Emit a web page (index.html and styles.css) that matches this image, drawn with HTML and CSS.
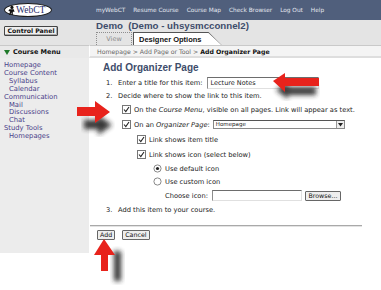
FILE: index.html
```html
<!DOCTYPE html>
<html lang="en">
<head>
    <meta charset="UTF-8">
    <title>WebCT - Add Organizer Page</title>
    <link rel="stylesheet" href="styles.css">
</head>
<body>
    <div class="page">
        <header class="topbar">
            <div class="brand">
                <div class="logo">
                    <svg class="logo-figure" width="7" height="11" viewBox="0 0 8 11">
                        <circle cx="4.5" cy="2" r="1.8" fill="#111"/>
                        <path d="M1.5 4 L6.5 4 L7.5 7 L5.5 7 L5.5 10.5 L4 10.5 L4 7.5 L2.5 10.5 L1 10.5 L2.5 6.5 L0.5 6 Z" fill="#111"/>
                    </svg>
                    <span class="logo-text">WebCT</span>
                </div>
            </div>
            <nav class="nav">
                <a href="#">myWebCT</a>
                <a href="#">Resume Course</a>
                <a href="#">Course Map</a>
                <a href="#">Check Browser</a>
                <a href="#">Log Out</a>
                <a href="#">Help</a>
            </nav>
        </header>

        <div class="layout">
            <div class="side-head">
                <button class="cp-btn">Control Panel</button>
            </div>
            <div class="course-head">
                <h1 class="course-title">Demo&nbsp; (Demo - uhsysmcconnel2)</h1>
                <div class="tabs">
                    <span class="tab-view">View</span>
                    <span class="tab-on"><span class="tab-inner">Designer Options</span></span>
                </div>
            </div>

            <div class="menu-title"><span class="tri"></span>Course Menu</div>
            <div class="crumbs">Homepage &gt; Add Page or Tool &gt; <b>Add Organizer Page</b></div>

            <ul class="menu">
                <li><a href="#">Homepage</a></li>
                <li><a href="#">Course Content</a></li>
                <li class="sub"><a href="#">Syllabus</a></li>
                <li class="sub"><a href="#">Calendar</a></li>
                <li><a href="#">Communication</a></li>
                <li class="sub"><a href="#">Mail</a></li>
                <li class="sub"><a href="#">Discussions</a></li>
                <li class="sub"><a href="#">Chat</a></li>
                <li><a href="#">Study Tools</a></li>
                <li class="sub"><a href="#">Homepages</a></li>
            </ul>

            <main class="content">
                <h2 class="page-title">Add Organizer Page</h2>

                <div class="row step">
                    <span class="num">1.</span>
                    <span>Enter a title for this item:</span>
                    <span class="field title-field">Lecture Notes</span>
                </div>
                <div class="row step">
                    <span class="num">2.</span>
                    <span>Decide where to show the link to this item.</span>
                </div>
                <div class="row opt">
                    <svg class="cb" width="9" height="9" viewBox="0 0 9 9"><rect x="0.5" y="0.5" width="8" height="8" fill="#fff" stroke="#777"/><path d="M2 4.5 L3.8 6.5 L7 2" fill="none" stroke="#222" stroke-width="1.1"/></svg>
                    <span>On the <i>Course Menu</i>, visible on all pages. Link will appear as text.</span>
                </div>
                <div class="row opt">
                    <svg class="cb" width="9" height="9" viewBox="0 0 9 9"><rect x="0.5" y="0.5" width="8" height="8" fill="#fff" stroke="#777"/><path d="M2 4.5 L3.8 6.5 L7 2" fill="none" stroke="#222" stroke-width="1.1"/></svg>
                    <span>On an <i>Organizer Page</i>:</span>
                    <span class="select">
                        <span class="select-text">Homepage</span>
                        <span class="select-btn"><svg width="5" height="4" viewBox="0 0 5 4"><path d="M0 0 L5 0 L2.5 3.5 Z" fill="#222"/></svg></span>
                    </span>
                </div>
                <div class="row sub-opt">
                    <svg class="cb" width="9" height="9" viewBox="0 0 9 9"><rect x="0.5" y="0.5" width="8" height="8" fill="#fff" stroke="#777"/><path d="M2 4.5 L3.8 6.5 L7 2" fill="none" stroke="#222" stroke-width="1.1"/></svg>
                    <span>Link shows item title</span>
                </div>
                <div class="row sub-opt">
                    <svg class="cb" width="9" height="9" viewBox="0 0 9 9"><rect x="0.5" y="0.5" width="8" height="8" fill="#fff" stroke="#777"/><path d="M2 4.5 L3.8 6.5 L7 2" fill="none" stroke="#222" stroke-width="1.1"/></svg>
                    <span>Link shows icon (select below)</span>
                </div>
                <div class="row radio-opt">
                    <svg class="rd" width="9" height="9" viewBox="0 0 9 9"><circle cx="4.5" cy="4.5" r="3.6" fill="#fff" stroke="#888"/><circle cx="4.5" cy="4.5" r="1.6" fill="#222"/></svg>
                    <span>Use default icon</span>
                </div>
                <div class="row radio-opt">
                    <svg class="rd" width="9" height="9" viewBox="0 0 9 9"><circle cx="4.5" cy="4.5" r="3.6" fill="#fff" stroke="#888"/></svg>
                    <span>Use custom icon</span>
                </div>
                <div class="row choose">
                    <span>Choose icon:</span>
                    <span class="field icon-field"></span>
                    <button class="btn browse">Browse...</button>
                </div>
                <div class="row step">
                    <span class="num">3.</span>
                    <span>Add this item to your course.</span>
                </div>

                <div class="rule"></div>

                <div class="actions">
                    <button class="btn">Add</button>
                    <button class="btn">Cancel</button>
                </div>
            </main>
        </div>

        <!-- callout arrows -->
        <svg class="arrow arrow-left" width="60" height="36" viewBox="0 0 60 36">
            <defs><filter id="blur1"><feGaussianBlur stdDeviation="2.5"/></filter></defs>
            <polygon points="8,22 20,14 20,19 48,19 48,27 20,27 20,31" fill="#222" opacity="0.9" filter="url(#blur1)"/>
            <polygon points="5,13 17,5 17,10 51,10 51,18 17,18 17,24" fill="#e8231c"/>
        </svg>
        <svg class="arrow arrow-right" width="44" height="44" viewBox="0 0 44 44">
            <defs><filter id="blur2"><feGaussianBlur stdDeviation="2.5"/></filter></defs>
            <polygon points="38,27 24,17 24,22 10,22 10,31 24,31 24,37" fill="#222" opacity="0.9" filter="url(#blur2)"/>
            <polygon points="36,14 21,3 21,9 3,9 3,18 21,18 21,25" fill="#e8231c"/>
        </svg>
        <svg class="arrow arrow-up" width="40" height="50" viewBox="0 0 40 50">
            <defs><filter id="blur3"><feGaussianBlur stdDeviation="2.5"/></filter></defs>
            <polygon points="25,14 20,18 22,18 22,45 29,45 29,18 31,18" fill="#222" opacity="0.9" filter="url(#blur3)"/>
            <polygon points="12,3 2,19 9,19 9,35 16,35 16,19 23,19" fill="#e8231c"/>
        </svg>
    </div>
</body>
</html>
```

FILE: styles.css
```css
body {
    margin: 0;
    background: #fff;
    font-family: "DejaVu Sans", Verdana, sans-serif;
    color: #222;
}

.page {
    position: relative;
    width: 381px;
    height: 290px;
    overflow: hidden;
}

/* top bar */

.topbar {
    display: flex;
    align-items: center;
    height: 20px;
    background: #505f7c;
}

.brand {
    width: 96px;
    flex-shrink: 0;
}

.logo {
    display: flex;
    align-items: center;
    box-sizing: border-box;
    width: 48px;
    height: 14px;
    margin-left: 4px;
    padding-left: 3px;
    background: #fff;
    border: 1px solid #1a1a1a;
    border-radius: 50%;
}

.logo-figure {
    flex-shrink: 0;
}

.logo-text {
    margin-left: 1px;
    font-family: "Liberation Serif", serif;
    font-size: 9.5px;
    line-height: 12px;
    color: #1f2e6c;
}

.nav {
    display: flex;
    gap: 8px;
    font-size: 5.8px;
}

.nav a {
    color: #e4e8f0;
    text-decoration: none;
}

/* page grid */

.layout {
    display: grid;
    grid-template-columns: 89px 1fr;
    grid-template-rows: 25px 13px auto;
}

.side-head {
    background: #e4e4e4;
    padding: 6px 0 0 4px;
}

.cp-btn {
    display: block;
    width: 54px;
    height: 10px;
    padding: 0;
    font-family: "DejaVu Sans", Verdana, sans-serif;
    font-size: 6.2px;
    font-weight: bold;
    line-height: 8px;
    color: #111;
    background: #efefef;
    border: 1px solid #444;
    border-radius: 1px;
    box-shadow: inset -1px -1px 0 #aaa;
}

.course-head {
    background: #e4e4e4;
    padding-left: 7px;
}

.course-title {
    margin: 0;
    font-family: "Liberation Sans", Arial, sans-serif;
    font-size: 9.7px;
    line-height: 11px;
    font-weight: bold;
    color: #3e4d6b;
}

.tabs {
    display: flex;
    align-items: flex-end;
    height: 13px;
    margin-top: 1px;
}

.tab-view {
    box-sizing: border-box;
    width: 36px;
    height: 13px;
    padding-top: 2px;
    font-size: 6.5px;
    color: #8a8a8a;
    text-align: center;
    border: 1px dotted #8e8e8e;
    border-bottom: none;
}

.tab-on {
    display: block;
    margin-left: 1px;
    padding: 1px 0 0 1px;
    background: #555;
    clip-path: polygon(0 0, calc(100% - 13px) 0, 100% 100%, 0 100%);
}

.tab-inner {
    display: block;
    height: 12px;
    padding: 2px 20px 0 5px;
    box-sizing: border-box;
    font-family: "Liberation Sans", Arial, sans-serif;
    font-size: 7.5px;
    font-weight: bold;
    color: #111;
    background: #fff;
    clip-path: polygon(0 0, calc(100% - 13px) 0, 100% 100%, 0 100%);
}

.menu-title {
    display: flex;
    align-items: center;
    gap: 3px;
    padding-left: 4px;
    font-size: 6.5px;
    font-weight: bold;
    color: #111;
    background: #e9e9e9;
    border-top: 1px solid #c9c9c9;
}

.tri {
    width: 0;
    height: 0;
    border-left: 3.5px solid transparent;
    border-right: 3.5px solid transparent;
    border-top: 5px solid #1f7a2a;
}

.crumbs {
    display: flex;
    align-items: center;
    padding-left: 7px;
    font-size: 6.2px;
    color: #666;
    background: #f4f4f4;
    border-top: 1px solid #c9c9c9;
    border-left: 1px solid #fff;
    border-bottom: 2px solid #dedede;
    white-space: pre;
}

.crumbs b {
    color: #111;
}

/* course menu */

.menu {
    margin: 0;
    padding: 4px 0 0 4px;
    list-style: none;
    background: #ececec;
    font-size: 6.8px;
    line-height: 7.9px;
}

.menu .sub {
    padding-left: 5px;
}

.menu a {
    color: #4a4189;
    text-decoration: none;
}

/* content */

.content {
    padding: 4px 19px 13px 0;
    font-size: 6.7px;
    color: #222;
    border-left: 1px solid #fff;
}

.page-title {
    margin: 0 0 2px 13px;
    font-family: "Liberation Sans", Arial, sans-serif;
    font-size: 10px;
    line-height: 12px;
    font-weight: bold;
    color: #3e4d6b;
}

.row {
    display: flex;
    align-items: center;
    white-space: nowrap;
}

.step {
    height: 13px;
    padding-left: 16px;
}

.num {
    width: 12px;
}

.opt {
    height: 15px;
    padding-left: 32px;
}

.sub-opt {
    height: 15px;
    padding-left: 47px;
}

.radio-opt {
    height: 13px;
    padding-left: 63px;
}

.choose {
    height: 15px;
    padding-left: 75px;
}

.cb,
.rd {
    flex-shrink: 0;
    margin-right: 3px;
}

.field {
    box-sizing: border-box;
    display: block;
    background: #fff;
    border: 1px solid #e0e0e0;
    border-top-color: #6d6d6d;
    border-left-color: #8d8d8d;
}

.title-field {
    width: 112px;
    height: 12px;
    margin-left: 4px;
    padding: 1px 0 0 3px;
    font-size: 6.5px;
    line-height: 9px;
}

.icon-field {
    width: 90px;
    height: 11px;
    margin-left: 4px;
}

.select {
    display: flex;
    box-sizing: border-box;
    width: 132px;
    height: 9px;
    margin-left: 3px;
    border: 1px solid #888;
    border-top-color: #555;
    background: #fff;
}

.select-text {
    flex: 1;
    padding-left: 2px;
    font-size: 5.5px;
    line-height: 7px;
}

.select-btn {
    display: flex;
    align-items: center;
    justify-content: center;
    width: 7px;
    border-left: 1px solid #999;
    background: #eee;
}

.btn {
    height: 10px;
    padding: 0 2px;
    font-family: "DejaVu Sans", Verdana, sans-serif;
    font-size: 6.3px;
    line-height: 8px;
    color: #111;
    background: #eee;
    border: 1px solid #666;
    border-radius: 1px;
}

.browse {
    margin-left: 3px;
    width: 36px;
}

.rule {
    margin-top: 9px;
    height: 0;
    border-top: 1px solid #a9a9a9;
    border-bottom: 1px solid #e3e3e3;
}

.actions {
    display: flex;
    gap: 7px;
    margin: 3px 0 0 7px;
}

/* callouts */

.arrow {
    position: absolute;
}

.arrow-left {
    left: 268px;
    top: 68px;
}

.arrow-right {
    left: 74px;
    top: 98px;
}

.arrow-up {
    left: 92px;
    top: 236px;
}
```
